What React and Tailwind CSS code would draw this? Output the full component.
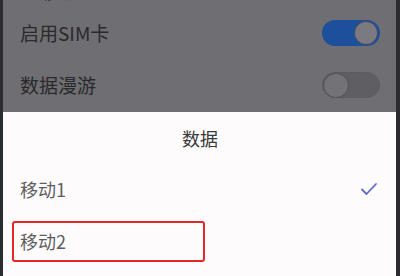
export default function App() {
  return (
    <div
      className="relative h-[276px] w-[400px] overflow-hidden bg-[#6f6e72]"
      style={{ fontFamily: '"Noto Sans CJK SC", "Noto Sans", sans-serif' }}
    >
      <div className="absolute left-0 top-0 h-full w-[3px] bg-[#2b2d33]" />
      <div className="absolute right-0 top-0 h-full w-[4px] bg-[#2b2b30]" />

      <div className="flex h-[112px] flex-col pl-[20px] pr-[20px]">
        <div className="-mt-[18px] flex h-[20px] items-end gap-2 text-[16px] leading-[20px] text-[#2e2e30]">
          <span className="mb-[3px] inline-block h-[14px] w-[14px] rounded-[2px] border-2 border-[#3a3a3c]" />
          <span>移动</span>
        </div>
        <div className="flex h-[62px] items-center justify-between">
          <span className="text-[19px] text-[#2a2a2c]">启用SIM卡</span>
          <div className="flex h-[26px] w-[58px] items-center justify-end rounded-full bg-[#1c4f9c] p-[2px]">
            <div className="h-[24px] w-[24px] rounded-full border border-[#4a4a56] bg-[#7b7a80]" />
          </div>
        </div>
        <div className="flex h-[42px] items-center justify-between">
          <span className="text-[19px] text-[#2a2a2c]">数据漫游</span>
          <div className="flex h-[26px] w-[58px] items-center rounded-full border border-[#5c5b60] bg-[#5f5e62]">
            <div className="h-[25px] w-[26px] rounded-full border border-[#505055] bg-[#737276]" />
          </div>
        </div>
      </div>

      <div className="flex h-[164px] flex-col bg-[#fdfbfc] pl-[12px] pr-[20px]">
        <div className="flex h-[52px] items-center justify-center pl-[8px] text-[18px] text-[#3a3a3c]">
          数据
        </div>
        <div className="flex h-[50px] items-center justify-between pl-[8px]">
          <span className="text-[18px] text-[#5e5e62]">移动1</span>
          <svg width="18" height="14" viewBox="0 0 18 14" className="mr-[2px]">
            <path d="M2 7.5 L6.5 12 L16 2" fill="none" stroke="#5a6cc0" strokeWidth="1.8" strokeLinecap="round" strokeLinejoin="round" />
          </svg>
        </div>
        <div className="mt-[7px] flex h-[41px] w-[193px] items-center rounded-[3px] border-2 border-[#e5262b] pl-[6px]">
          <span className="text-[18px] text-[#5e5e62]">移动2</span>
        </div>
      </div>
    </div>
  );
}
